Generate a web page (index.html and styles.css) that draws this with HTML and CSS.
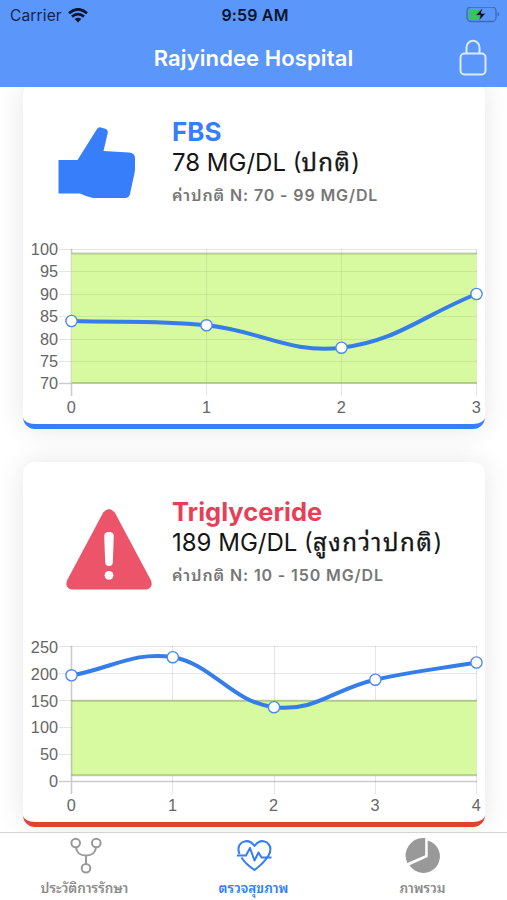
FILE: index.html
```html
<!DOCTYPE html>
<html lang="th">
<head>
<meta charset="utf-8">
<title>Rajyindee Hospital</title>
<link rel="stylesheet" href="styles.css">
</head>
<body>
<div class="app">
  <header class="header">
    <div class="status">
      <div class="carrier"><span>Carrier</span>
        <svg width="20" height="15" viewBox="0 0 20 15"><g fill="none" stroke="#0b1630" stroke-width="2.7"><path d="M1 5.2Q10-2.6 19 5.2"/><path d="M4 8.6Q10 3.6 16 8.6"/></g><path d="M6.6 11.1Q10 8.3 13.4 11.1L10 14.6Z" fill="#0b1630"/></svg>
      </div>
      <div class="clock">9:59 AM</div>
      <svg class="battery" width="34" height="17" viewBox="0 1.500 34 17"><rect x="1" y="1.500" width="29" height="14.500" rx="4" fill="none" stroke="#3e6bb5" stroke-width="1.3"/><path d="M31.500 6.500v4.500q1.600-.8 1.600-2.200T31.500 6.500Z" fill="#3e6bb5"/><rect x="3" y="3.500" width="12.500" height="10.500" rx="2" fill="#34c759"/><path d="M16.800 2.300 9.500 9.800h4.700l-1.500 5.700 7.300-7.700h-4.700Z" fill="#060b14" stroke="#5b96fb" stroke-width=".8"/></svg>
    </div>
    <div class="nav">
      <h1 class="title">Rajyindee Hospital</h1>
      <svg class="lock" width="28" height="38" viewBox="0 0 28 38"><g fill="none" stroke="#dce9ff" stroke-width="2"><rect x="1.500" y="14.500" width="25" height="21" rx="4"/><path d="M7.500 14.500V8.300a6.500 6.500 0 0 1 13 0v6.200"/></g></svg>
    </div>
  </header>

  <main class="content">
    <section class="card card-normal">
      <div class="summary">
        <svg class="icon" width="149" height="130" viewBox="23 82 149 130"><path d="M58.500 160H77.500L97 129Q98.500 126.500 101 127.500L106 129Q108.500 130.500 107.500 134L103.500 151L129 152.500Q135 153 135 158V170Q134.500 174 133 180L130 194Q129 198 125 198H93Q87 197 80 193.500H58.500Z" fill="#377ffa"/></svg>
        <div class="info">
          <h2 class="name">FBS</h2>
          <p class="value">78 MG/DL (<span class="th th-a">ปกติ</span>)</p>
          <p class="range"><span class="th th-r">ค่าปกติ</span> N: 70 - 99 MG/DL</p>
        </div>
      </div>
      <svg class="chart" width="462" height="190" viewBox="23 234 462 190">
        <g class="grid"><path d="M59 249.500H477M59 271.500H477M59 294.500H477M59 316.500H477M59 339.500H477M59 361.500H477M206.500 249V396M341.500 249V396M476.500 249V396"/></g>
        <path class="axis" d="M71.500 249V396M59 383.500H71"/>
        <rect x="71.500" y="253.500" width="405" height="130" fill="#d7f9a0"/>
        <g class="grid-soft"><path d="M72 271.500H477M72 294.500H477M72 316.500H477M72 339.500H477M72 361.500H477M206.500 254V383M341.500 254V383"/></g>
        <path class="band" d="M71.500 253.500H477M71.500 383H477"/>
        <path class="line" d="M71.500 321C125.500 322.600 152.500 319.900 206.500 325.300S289 353.800 341.500 347.700C397 341.300 422.500 315.500 476.500 294"/>
        <g class="dots"><circle cx="71.500" cy="321" r="5.600"/><circle cx="206.500" cy="325.300" r="5.600"/><circle cx="341.500" cy="347.700" r="5.600"/><circle cx="476.500" cy="294" r="5.600"/></g>
        <g class="ylab"><text x="58" y="255">100</text><text x="58" y="277">95</text><text x="58" y="300">90</text><text x="58" y="322">85</text><text x="58" y="345">80</text><text x="58" y="367">75</text><text x="58" y="389">70</text></g>
        <g class="xlab"><text x="71.200" y="413">0</text><text x="206.500" y="413">1</text><text x="341.200" y="413">2</text><text x="476.200" y="413">3</text></g>
      </svg>
    </section>

    <section class="card card-high">
      <div class="summary">
        <svg class="icon" width="149" height="130" viewBox="23 462 149 130"><path d="M103.200 512.500Q109 505.500 114.800 512.500L151 580.500Q153.500 588 146.500 589.500H71.500Q64.500 588 67 580.500Z" fill="#ec5569"/><path d="M104.200 536Q104.200 532 109 532T113.800 536L112.800 562.500Q112.500 566 109 566T105.200 562.500Z" fill="#fff"/><circle cx="109" cy="575.300" r="4.400" fill="#fff"/></svg>
        <div class="info">
          <h2 class="name">Triglyceride</h2>
          <p class="value">189 MG/DL (<span class="th th-b">สูงกว่าปกติ</span>)</p>
          <p class="range"><span class="th th-r">ค่าปกติ</span> N: 10 - 150 MG/DL</p>
        </div>
      </div>
      <svg class="chart" width="462" height="190" viewBox="23 632 462 190">
        <g class="grid"><path d="M59 646.500H477M59 673.500H477M59 700.500H477M59 727.500H72M59 754.500H72M172.500 646V794M274.500 646V794M375.500 646V794M476.500 646V794"/></g>
        <rect x="71.500" y="700.500" width="405" height="75" fill="#d7f9a0"/>
        <path class="band" d="M71.500 700.800H477M71.500 775.300H477"/>
        <path class="axis" d="M71.500 646V794M59 781.500H477"/>
        <path class="line" d="M71.500 675.500C112 668.100 134 651 172.800 657.200S232 702.300 274 707.200 334.300 688.500 375.300 679.700C415.500 670.700 436 669.300 476.500 662.500"/>
        <g class="dots"><circle cx="71.500" cy="675.300" r="5.600"/><circle cx="172.800" cy="657.200" r="5.600"/><circle cx="274" cy="707.200" r="5.600"/><circle cx="375.300" cy="679.700" r="5.600"/><circle cx="476.500" cy="662.500" r="5.600"/></g>
        <g class="ylab"><text x="58" y="653">250</text><text x="58" y="680">200</text><text x="58" y="707">150</text><text x="58" y="733">100</text><text x="58" y="760">50</text><text x="58" y="787">0</text></g>
        <g class="xlab"><text x="71.200" y="811">0</text><text x="172.500" y="811">1</text><text x="273.500" y="811">2</text><text x="375" y="811">3</text><text x="476.200" y="811">4</text></g>
      </svg>
    </section>
  </main>

  <nav class="tabs">
    <div class="tab">
      <svg width="40" height="42" viewBox="65 834 40 42"><g fill="none" stroke="#999" stroke-width="2"><circle cx="75.700" cy="843" r="4.300"/><circle cx="96.300" cy="843" r="4.300"/><circle cx="86" cy="868.200" r="4.300"/><path d="M76 847.500Q77 855.500 86 855.500T96 847.500M86 855.500V864"/></g></svg>
      <span class="label l1">ประวัติการรักษา</span>
    </div>
    <div class="tab active">
      <svg width="40" height="42" viewBox="234 834 40 42"><g fill="none" stroke="#347df6" stroke-width="2" stroke-linejoin="round"><path d="M239.500 854Q236.500 846.500 242 842.500 249 838.500 254.500 846 260 838.500 267 842.500 273 847.500 268.500 855.500 264 863 254.500 870 245.500 864 241.500 857.500"/><path d="M237 855.500H246L250 848 254.500 860.500 258.500 852.500 261.500 857.500H271.500"/></g></svg>
      <span class="label l2">ตรวจสุขภาพ</span>
    </div>
    <div class="tab">
      <svg width="40" height="42" viewBox="402.500 834 40 42"><g fill="#999"><path d="M424.700 838V855.300L406.800 863A17.700 17.700 0 0 1 424.700 838Z"/><path d="M427.200 840.500A16.500 16.500 0 1 1 409 865.300L427.200 857Z"/></g></svg>
      <span class="label l3">ภาพรวม</span>
    </div>
  </nav>
</div>
</body>
</html>
```
FILE: styles.css
```css
* { box-sizing: border-box; margin: 0; padding: 0; }
body { width: 507px; height: 900px; overflow: hidden; background: #fff; font-family: Inter, "Noto Sans Thai Looped", Loma, Garuda, "Noto Sans", sans-serif; }
svg { display: block; flex: none; }
.app { display: flex; flex-direction: column; height: 900px; }
.header { height: 87px; background: #5b96fb; flex: none; }
.status { height: 29px; padding: 1px 7px 0 10px; display: grid; grid-template-columns: 1fr auto 1fr; align-items: center; }
.carrier { display: flex; align-items: center; gap: 6px; font-size: 15.5px; letter-spacing: .15px; color: #12244a; }
.clock { font-size: 16px; font-weight: 600; letter-spacing: .15px; color: #0a1428; }
.battery { justify-self: end; }
.nav { height: 58px; display: grid; grid-template-columns: 1fr auto 1fr; align-items: center; padding-right: 20px; padding-left: 20px; }
.title { grid-column: 2; font-size: 22px; font-weight: 600; letter-spacing: .1px; color: #fff; white-space: nowrap; }
.lock { justify-self: end; }
.content { height: 745px; overflow: hidden; padding: 0 22px 0 23px; flex: none; }
.card { width: 462px; background: #fff; border-radius: 12px; border-bottom: 5px solid #377ffa; box-shadow: 0 0 28px rgba(0,0,0,.1); display: flex; flex-direction: column; justify-content: space-between; }
.card-normal { height: 347px; margin-top: -5px; }
.card-high { height: 365px; margin-top: 33px; border-bottom-color: #e23f36; }
.summary { display: flex; }
.info { padding-top: 34px; white-space: nowrap; }
.name { font-size: 26px; line-height: 32px; font-weight: 700; color: #377ffa; }
.card-high .name { font-size: 25.5px; color: #e83f58; }
.value { font-size: 24px; line-height: 30px; color: #161616; }
.range { font-size: 16px; line-height: 34px; font-weight: 600; letter-spacing: .88px; color: #777; }
.th { display: inline-block; line-height: 1; }
.th-a { letter-spacing: 1.4px; -webkit-text-stroke: .3px #161616; }
.th-b { letter-spacing: 1.6px; -webkit-text-stroke: .3px #161616; }
.grid path { stroke: rgba(0,0,0,.1); stroke-width: 1; fill: none; }
.grid-soft path { stroke: rgba(0,0,0,.07); stroke-width: 1; fill: none; }
.band { stroke: rgba(100,125,70,.36); stroke-width: 2; }
.axis { stroke: rgba(0,0,0,.2); stroke-width: 1.6; fill: none; }
.line { stroke: #357de8; stroke-width: 4; fill: none; }
.dots circle { fill: #fff; stroke: #4b8aef; stroke-width: 1.4; }
.ylab text, .xlab text { font: 16.300px "Liberation Sans", sans-serif; fill: #666; }
.ylab { text-anchor: end; }
.xlab { text-anchor: middle; }
.tabs { height: 68px; background: #fff; border-top: 1px solid #d4d4d4; display: grid; grid-template-columns: repeat(3, 1fr); }
.tab { display: flex; flex-direction: column; align-items: center; padding-top: 1px; color: #8c8c8c; }
.label { font-size: 13.500px; line-height: 24px; font-weight: 600; white-space: nowrap; }
.active { color: #347df6; }
```
